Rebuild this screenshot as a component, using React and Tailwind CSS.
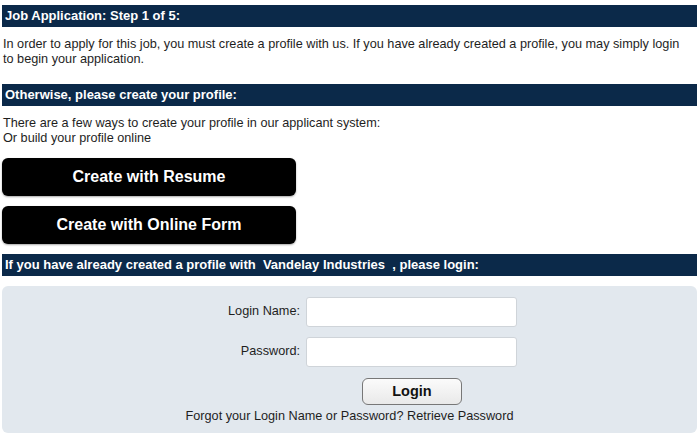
import React from 'react';

const SectionBar = ({ children }) => (
  <div className="bg-[#0b2949] text-white font-bold text-[13px] leading-[22px] h-[22px] px-[3px] mx-[2px] whitespace-nowrap overflow-hidden">
    {children}
  </div>
);

const BigButton = ({ children }) => (
  <button className="w-[294px] h-[38px] ml-[2px] bg-black text-white font-bold text-[16px] rounded-[6px] shadow-[0_1px_2px_rgba(0,0,0,0.35)] flex items-center justify-center">
    {children}
  </button>
);

export default function App() {
  return (
    <div className="w-[699px] h-[434px] bg-white text-[#1e1e1e] text-[12.7px] overflow-hidden pt-[5px]" style={{ fontFamily: '"Liberation Sans", Arial, sans-serif' }}>
      <SectionBar>Job Application: Step 1 of 5:</SectionBar>
      <p className="pl-[3px] pr-[8px] mt-[10px] leading-[15px]">
        In order to apply for this job, you must create a profile with us. If you have already created a profile, you may simply login to begin your application.
      </p>

      <div className="mt-[17px]">
        <SectionBar>Otherwise, please create your profile:</SectionBar>
      </div>
      <div className="px-[3px] mt-[10px] leading-[15px]">
        <div>There are a few ways to create your profile in our applicant system:</div>
        <div>Or build your profile online</div>
      </div>

      {/* Create buttons */}
      <div className="flex flex-col gap-[10px] mt-[12px]">
        <BigButton>Create with Resume</BigButton>
        <BigButton>Create with Online Form</BigButton>
      </div>

      <div className="mt-[10px]">
        <SectionBar>If you have already created a profile with &nbsp;Vandelay Industries &nbsp;, please login:</SectionBar>
      </div>

      {/* Login panel */}
      <div className="mx-[2px] mt-[10px] bg-[#e2e8ee] rounded-[6px] pt-[11px] pb-[9px]">
        <div className="grid grid-cols-[298px_211px] gap-x-[6px] gap-y-[10px] items-center">
          <label className="text-right">Login Name:</label>
          <input type="text" className="h-[30px] bg-white border border-[#cfd4d9] rounded-[3px]" />
          <label className="text-right">Password:</label>
          <input type="password" className="h-[30px] bg-white border border-[#cfd4d9] rounded-[3px]" />
        </div>
        <div className="mt-[11px] pl-[360px]">
          <button className="w-[100px] h-[27px] bg-gradient-to-b from-[#fbfbfb] to-[#e9e9e9] border border-[#777] rounded-[6px] font-bold text-[14.5px] text-[#111]">
            Login
          </button>
        </div>
        <div className="text-center mt-[4px] leading-[15px]">
          Forgot your Login Name or Password? <span>Retrieve Password</span>
        </div>
      </div>
    </div>
  );
}
